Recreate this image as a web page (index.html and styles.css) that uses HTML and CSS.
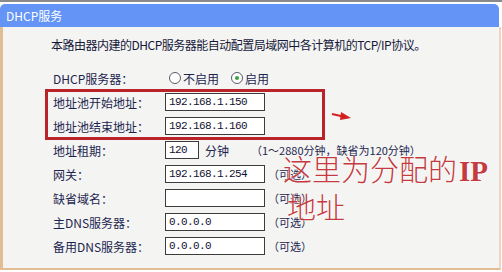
FILE: index.html
```html
<!DOCTYPE html>
<html lang="zh-CN">
<head>
<meta charset="UTF-8" />
<title>DHCP服务</title>
<link rel="stylesheet" href="styles.css">
</head>
<body>
  <div class="topline"></div>
  <div class="title">DHCP服务</div>
  <div class="panel">
    <p class="intro">本路由器内建的DHCP服务器能自动配置局域网中各计算机的TCP/IP协议。</p>

    <div class="rows">
      <div class="row">
        <span class="label">DHCP服务器：</span>
        <span class="radio"></span><span class="opt">不启用</span>
        <span class="radio checked"></span><span class="opt">启用</span>
      </div>

      <div class="pool">
        <div class="row">
          <span class="label">地址池开始地址：</span>
          <span class="field">192.168.1.150</span>
        </div>
        <div class="row">
          <span class="label">地址池结束地址：</span>
          <span class="field">192.168.1.160</span>
        </div>
      </div>

      <div class="row">
        <span class="label">地址租期：</span>
        <span class="field short">120</span>
        <span class="unit">分钟</span>
        <span class="hint">（1～2880分钟，缺省为120分钟）</span>
      </div>
      <div class="row">
        <span class="label">网关：</span>
        <span class="field">192.168.1.254</span>
        <span class="hint">（可选）</span>
      </div>
      <div class="row">
        <span class="label">缺省域名：</span>
        <span class="field"></span>
        <span class="hint">（可选）</span>
      </div>
      <div class="row">
        <span class="label">主DNS服务器：</span>
        <span class="field">0.0.0.0</span>
        <span class="hint">（可选）</span>
      </div>
      <div class="row">
        <span class="label">备用DNS服务器：</span>
        <span class="field">0.0.0.0</span>
        <span class="hint">（可选）</span>
      </div>
    </div>

    <!-- hand-drawn note over the form -->
    <svg class="arrow" width="22" height="12" viewBox="0 0 22 12">
      <path d="M1 4 L12 6.5" stroke="#d42020" stroke-width="2" fill="none" />
      <path d="M10 2 L20 8 L9 10 Z" fill="#d42020" />
    </svg>
    <div class="note">
      <span>这里为分配的<b>IP</b></span>
      <span>地址</span>
    </div>
  </div>
</body>
</html>
```

FILE: styles.css
```css
* {
  box-sizing: border-box;
}
body {
  margin: 0;
  background: #fff;
  font-family: "Noto Sans CJK SC", "DejaVu Sans", sans-serif;
  font-size: 12px;
  color: #1c2550;
  width: 502px;
}
.topline {
  height: 2px;
  background: #8a8a8a;
  margin-bottom: 2px;
}
.title {
  height: 23px;
  line-height: 23px;
  background: #6394f6;
  color: #fff;
  padding-left: 6px;
  border-radius: 5px 5px 0 0;
  margin-right: 3px;
}
.panel {
  position: relative;
  height: 243px;
  background: #f4f4f2;
  border-left: 3px solid #e2bd94;
  border-right: 2px solid #ecd6bc;
  border-bottom: 2px solid #e2bd94;
  margin-right: 1px;
}
.intro {
  margin: 0;
  padding: 10px 0 0 48px;
  line-height: 16px;
  letter-spacing: -0.5px;
  color: #15183a;
}
.rows {
  margin-top: 13px;
  padding-left: 50px;
}
.row {
  height: 24px;
  display: flex;
  align-items: center;
}
.label {
  width: 112px;
  flex: none;
}
.radio {
  width: 12px;
  height: 12px;
  border: 1px solid #5a5a6a;
  border-radius: 50%;
  background: #fff;
  margin: 0 2px 0 4px;
  position: relative;
}
.radio.checked::after {
  content: "";
  position: absolute;
  left: 3px;
  top: 3px;
  width: 4px;
  height: 4px;
  border-radius: 50%;
  background: #3aa33a;
}
.opt {
  margin-right: 8px;
}
.field {
  width: 100px;
  height: 18px;
  border: 1px solid #3c3c3c;
  background: #fff;
  font-family: "Liberation Mono", "DejaVu Sans Mono", monospace;
  font-size: 11px;
  letter-spacing: -0.6px;
  line-height: 16px;
  padding-left: 3px;
  color: #101030;
}
.field.short {
  width: 34px;
}
.unit {
  margin-left: 6px;
}
.hint {
  font-size: 11px;
  margin-left: 3px;
}
.unit + .hint {
  margin-left: 22px;
}
.pool {
  position: relative;
}
.pool::before {
  content: "";
  position: absolute;
  left: -8px;
  top: -1px;
  width: 274px;
  height: 45px;
  border: 3px solid #b8242a;
  pointer-events: none;
}
.arrow {
  position: absolute;
  left: 328px;
  top: 83px;
}
.note {
  position: absolute;
  left: 280px;
  top: 124px;
  display: flex;
  flex-direction: column;
  font-size: 29px;
  font-weight: 300;
  line-height: 35px;
  color: #c43a3e;
  text-shadow: 0 0 2px #fff, 0 0 1px #fff;
}
.note b {
  font-family: "Liberation Serif", serif;
  font-weight: bold;
  margin-left: 2px;
}
.note span + span {
  margin-left: 4px;
}
```
